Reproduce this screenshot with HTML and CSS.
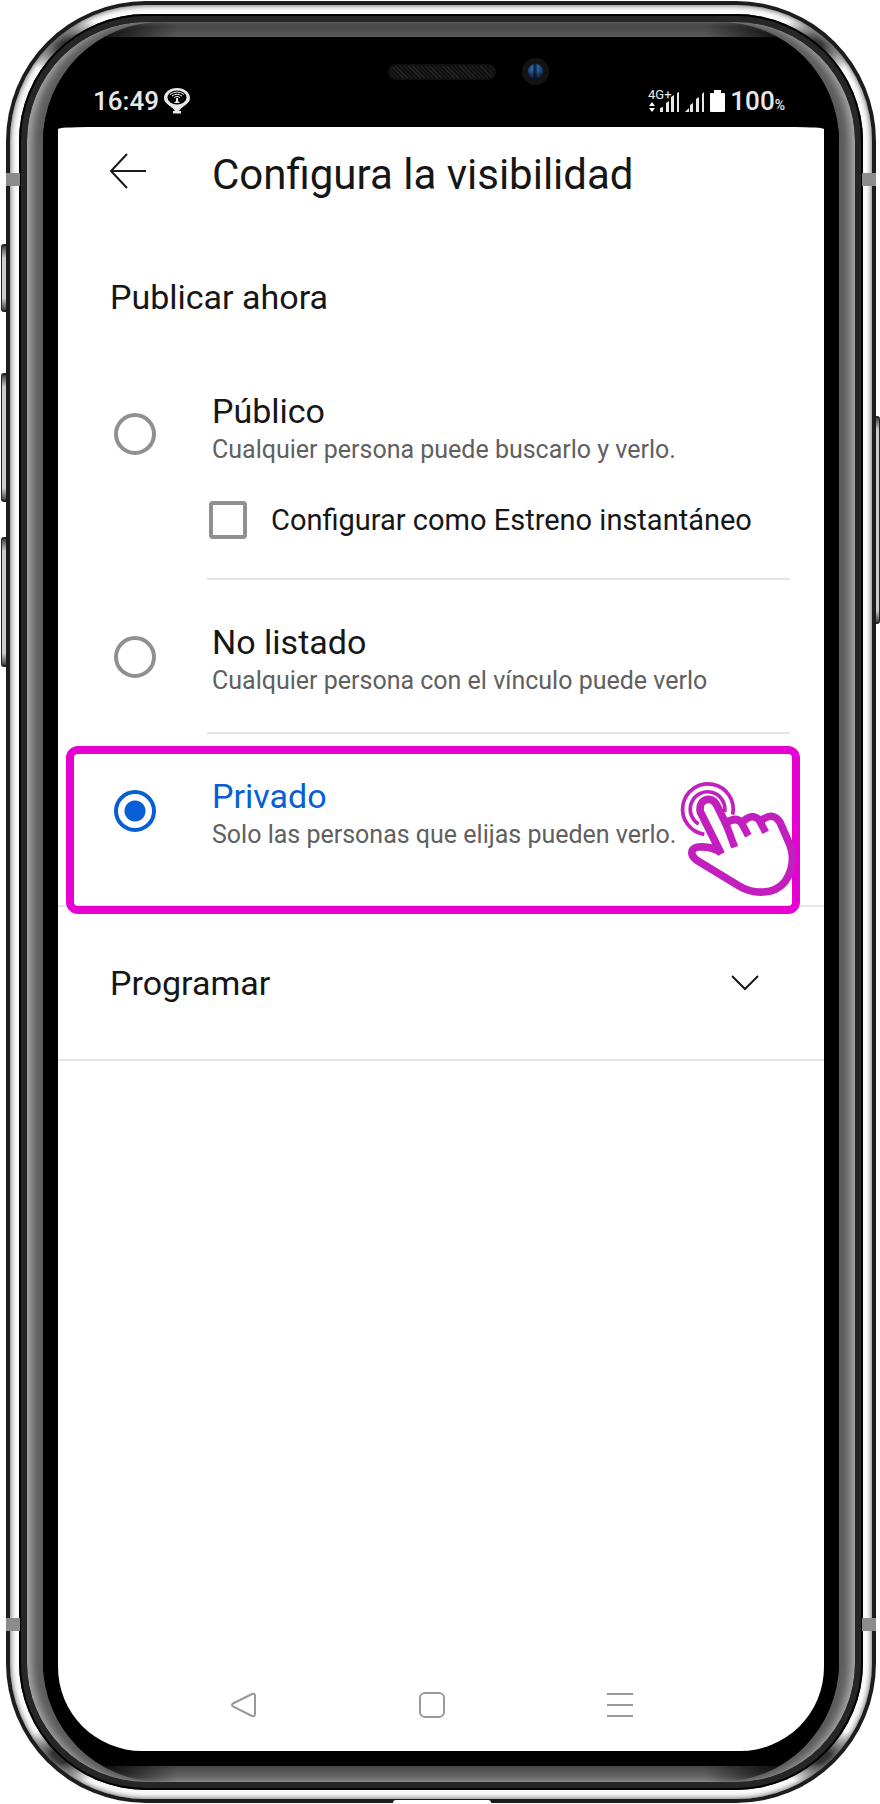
FILE: index.html
```html
<!DOCTYPE html>
<html lang="es">
<head>
<meta charset="utf-8">
<meta name="viewport" content="width=device-width, initial-scale=1">
<title>Configura la visibilidad</title>
<link rel="stylesheet" href="styles.css">
</head>
<body>
<div class="phone">
  <span class="key key-mute"></span>
  <span class="key key-up"></span>
  <span class="key key-down"></span>
  <span class="key key-power"></span>
  <div class="edge">
    <div class="steel">
      <div class="seal">
        <div class="bevel">
          <div class="glass">
            <div class="status">
              <span class="speaker"></span>
              <span class="camera"></span>
              <div class="status-group">
                <span class="clock">16:49</span>
                <svg class="pin" viewBox="0 0 26 26" aria-hidden="true">
                  <path d="M13 0C5.500 0 0 4.500 0 10c0 5 5 7 9 10.500L11 23H9v2.500h8V23h-2l2-2.500C21 17 26 15 26 10 26 4.500 20.500 0 13 0z" fill="#e8e8e8"/>
                  <ellipse cx="13" cy="9.500" rx="9.500" ry="7" fill="#000"/>
                  <path d="M6 6.500q7-5 14 0M8 8q5-3.500 10 0M10 9.500q3-2.500 6 0" fill="none" stroke="#e8e8e8" stroke-width="1"/>
                  <path d="M12 10h2v3l2 2h-6l2-2z" fill="#e8e8e8"/>
                </svg>
              </div>
              <div class="status-group">
                <svg class="network" viewBox="0 0 32 26" aria-hidden="true">
                  <text x="0" y="11" class="network-label">4G+</text>
                  <path d="M1 18l3-4 3 4zM1 20l3 4 3-4z" fill="#fff"/>
                  <path d="M12 24v-4l3-1v5zM18 24v-9l3-2v11zM23 24V9l3-2v17zM29 24V5l2-1v20z" fill="#e8e8e8"/>
                </svg>
                <svg class="bars" viewBox="0 0 20 26" aria-hidden="true">
                  <path d="M0 24l4-4v4zM5 24v-7l3-2v9zM11 24V11l3-2v15zM17 24V6l2-2v20z" fill="#e8e8e8"/>
                </svg>
                <svg class="battery" viewBox="0 0 15 26" aria-hidden="true">
                  <path d="M4 2h7v3h3q1 0 1 1v17q0 1-1 1H1q-1 0-1-1V6q0-1 1-1h3z" fill="#fff"/>
                </svg>
                <span class="clock">100<small>%</small></span>
              </div>
            </div>
            <main class="screen">
              <header class="header">
                <button class="back" type="button" aria-label="Atrás">
                  <svg viewBox="0 0 38 36" aria-hidden="true"><path d="M37 18H2M18 1L2 18l16 17"/></svg>
                </button>
                <h1>Configura la visibilidad</h1>
              </header>
              <form>
                <h2>Publicar ahora</h2>
                <div class="option option-extra">
                  <input type="radio" name="visibility" id="public">
                  <div class="option-body">
                    <label for="public"><strong>Público</strong><span>Cualquier persona puede buscarlo y verlo.</span></label>
                    <label class="check"><input type="checkbox">Configurar como Estreno instantáneo</label>
                  </div>
                </div>
                <div class="option">
                  <input type="radio" name="visibility" id="unlisted">
                  <div class="option-body">
                    <label for="unlisted"><strong>No listado</strong><span>Cualquier persona con el vínculo puede verlo</span></label>
                  </div>
                </div>
                <div class="option option-last">
                  <input type="radio" name="visibility" id="private" checked>
                  <div class="option-body">
                    <label for="private"><strong>Privado</strong><span>Solo las personas que elijas pueden verlo.</span></label>
                  </div>
                  <div class="highlight"></div>
                  <svg class="hand" viewBox="50 120 360 354" aria-hidden="true">
                    <g fill="none" stroke="#c31fbf">
                      <path d="M129 283A76 76 0 1 1 214 224" stroke-width="11"/>
                      <path d="M112 252A52 52 0 1 1 190 216" stroke-width="11"/>
                      <path d="M183 338L117 220C106 176 151 166 166 195L193 250Q224 228 241 249Q272 214 298 244Q334 212 356 247L381 304C400 345 399 384 371 425C338 464 278 465 232 437L110 363C84 346 86 325 112 321Q154 316 183 338z" fill="#fff" stroke="none"/>
                      <path d="M180 342L117 215C110 176 151 166 166 195L193 250Q224 228 241 249Q272 214 298 244Q334 212 356 247L381 304C400 345 399 384 371 425C338 464 278 465 232 437L110 363C84 346 86 325 112 321Q150 318 180 338" stroke-width="23"/>
                      <path d="M191 244L220 322M238 244L261 287M291 235L313 277" stroke-width="22"/>
                    </g>
                  </svg>
                </div>
                <button class="schedule" type="button">
                  <span>Programar</span>
                  <svg viewBox="0 0 28 16" aria-hidden="true"><path d="M1 1l13 13L27 1"/></svg>
                </button>
              </form>
              <nav class="nav">
                <button type="button" aria-label="Volver"><svg viewBox="0 0 26 26" aria-hidden="true"><path d="M2 11.500L21 2q3-1 3 2v18q0 3-3 2L2 14.500q-2-1.500 0-3z"/></svg></button>
                <button type="button" aria-label="Inicio"><svg viewBox="0 0 26 26" aria-hidden="true"><rect x="1" y="1" width="24" height="24" rx="5"/></svg></button>
                <button type="button" aria-label="Recientes"><svg viewBox="0 0 26 26" aria-hidden="true"><path d="M0 2h26M0 13h26M0 24h26"/></svg></button>
              </nav>
            </main>
          </div>
        </div>
      </div>
    </div>
    <span class="band band-tl"></span>
    <span class="band band-tr"></span>
    <span class="band band-bl"></span>
    <span class="band band-br"></span>
    <span class="port"></span>
  </div>
</div>
</body>
</html>
```
FILE: styles.css
```css
* { box-sizing: border-box; }

body {
  margin: 0;
  background: #fff;
  color: #161616;
  font-family: Roboto, "Noto Sans", sans-serif;
}

button {
  padding: 0;
  border: 0;
  background: none;
  color: inherit;
  font: inherit;
}

svg { display: block; }

/* Phone body: nested layers from the outer edge to the glass */
.phone {
  position: relative;
  display: flex;
  min-height: 100vh;
  padding: 1px 4px 1px 6px;
}

.edge, .steel, .seal, .bevel, .glass {
  display: flex;
  flex: 1;
  min-width: 0;
}

.edge {
  position: relative;
  padding: 4px;
  border-radius: 140px;
  background: #1c1e1d;
}

.steel {
  padding: 9px;
  border-radius: 136px;
  background:
    radial-gradient(ellipse 46px 30px at 60px 42px, #333 20%, transparent),
    radial-gradient(ellipse 46px 30px at calc(100% - 60px) 42px, #333 20%, transparent),
    radial-gradient(ellipse 46px 30px at 50px calc(100% - 42px), #333 20%, transparent),
    radial-gradient(ellipse 46px 30px at calc(100% - 50px) calc(100% - 42px), #333 20%, transparent),
    #fafafa;
  box-shadow: inset 0 0 5px 1px #777;
}

.seal {
  padding: 8px;
  border-radius: 127px;
  background: #262626;
  box-shadow: inset 0 0 0 2px #000;
}

/* Side highlights follow the curve; the top and bottom ones fade at the corners */
.bevel {
  padding: 15px 16px 16px;
  border-radius: 119px;
  background:
    linear-gradient(90deg, transparent 60px, #000 60px, transparent 150px, transparent calc(100% - 150px), #000 calc(100% - 60px), transparent calc(100% - 60px)) 0 0 / 100% 40px no-repeat,
    linear-gradient(90deg, transparent 60px, #000 60px, transparent 150px, transparent calc(100% - 150px), #000 calc(100% - 60px), transparent calc(100% - 60px)) 0 100% / 100% 40px no-repeat,
    linear-gradient(#3c3c3c, #5c5c5c) 0 0 / 100% 15px no-repeat,
    linear-gradient(#444, #777) 0 100% / 100% 16px no-repeat,
    #000;
  box-shadow:
    inset 9px 0 8px -4px #aaa,
    inset -9px 0 8px -4px #aaa,
    inset 16px 0 0 #5c5c5c,
    inset -16px 0 0 #5c5c5c;
}

.glass {
  flex-direction: column;
  padding: 0 15px 15px;
  border-radius: 104px;
  background: #000;
}

.key {
  position: absolute;
  left: 1px;
  width: 8px;
  border: solid #222;
  border-width: 2px 1px;
  border-radius: 3px 0 0 3px;
  background: linear-gradient(#444, #ccc 12px, #ccc calc(100% - 12px), #444);
}

.key-mute { top: 244px; height: 68px; }
.key-up { top: 373px; height: 129px; }
.key-down { top: 537px; height: 130px; }
.key-power {
  top: 416px;
  right: 0;
  left: auto;
  height: 208px;
  border-radius: 0 3px 3px 0;
}

.band {
  position: absolute;
  width: 14px;
  height: 13px;
  background: #8c8c8c;
}

.band-tl { top: 172px; left: 0; }
.band-tr { top: 172px; right: 0; }
.band-bl { bottom: 172px; left: 0; }
.band-br { bottom: 172px; right: 0; }

.port {
  position: absolute;
  bottom: 0;
  left: calc(50% - 48px);
  width: 98px;
  height: 3px;
  border-radius: 12px 12px 0 0;
  background: #fff;
}

/* Status bar */
.status {
  position: relative;
  display: flex;
  justify-content: space-between;
  align-items: flex-end;
  height: 90px;
  padding: 0 39px 10px 35px;
}

.status-group {
  display: flex;
  align-items: center;
  gap: 5px;
  color: #e8e8e8;
}

.clock {
  font-size: 26px;
  font-weight: 500;
  line-height: 32px;
}

.clock small {
  font-size: 14px;
  line-height: 14px;
}

.pin { width: 26px; height: 26px; }
.network { width: 32px; height: 26px; }
.network-label { fill: #e8e8e8; font-size: 13px; }
.bars { width: 20px; height: 26px; }
.battery { width: 15px; height: 26px; }

.speaker {
  position: absolute;
  top: 27px;
  left: calc(50% - 53px);
  width: 108px;
  height: 16px;
  border: 2px solid #111;
  border-radius: 8px;
  background: repeating-linear-gradient(45deg, #222 0 1px, #111 1px 3px);
}

.camera {
  position: absolute;
  top: 21px;
  left: calc(50% + 81px);
  width: 27px;
  height: 27px;
  border: 6px solid #131313;
  border-radius: 50%;
  background: linear-gradient(transparent 40%, #0a1528), linear-gradient(90deg, #1b4a86, #2a62a5 30%, #0a1528 45%, #28609f 65%, #163a68);
}

/* Screen */
.screen {
  display: flex;
  flex: 1;
  flex-direction: column;
  overflow: hidden;
  border-radius: 30px 30px 84px 84px / 2px 2px 84px 84px;
  background: #fff;
}

.header {
  display: flex;
  align-items: center;
  height: 96px;
  padding-left: 51px;
}

.back { margin-right: 65px; }

.back svg {
  width: 38px;
  height: 36px;
  margin-bottom: 8px;
}

.back path, .schedule path {
  fill: none;
  stroke: #1a1a1a;
  stroke-width: 2;
}

h1 {
  margin: 0;
  font-size: 42px;
  font-weight: 400;
  line-height: 50px;
}

h2 {
  margin: 0;
  padding-left: 52px;
  font-size: 34px;
  font-weight: 400;
  line-height: 148px;
}

.option {
  position: relative;
  display: flex;
  align-items: flex-start;
  padding: 42px 34px 0 56px;
}

.option-extra { padding-top: 20px; }

.option input {
  flex: none;
  margin: 0;
  appearance: none;
  border: 4px solid #909090;
}

.option input[type="radio"] {
  width: 42px;
  height: 42px;
  margin: 14px 51px 0 0;
  border-radius: 50%;
}

.option-extra input[type="radio"] { margin-top: 22px; }

.option input[type="radio"]:checked {
  border-color: #065fd4;
  background: radial-gradient(circle, #065fd4 10px, transparent 11px);
}

.option-body {
  flex: 1;
  padding-bottom: 32px;
  border-bottom: 2px solid #e5e5e5;
}

.option-extra .option-body { padding-bottom: 38px; }

.option-body label {
  display: block;
  padding-left: 5px;
}

.option strong {
  display: block;
  font-size: 34px;
  font-weight: 400;
  line-height: 40px;
}

.option span {
  display: block;
  color: #606060;
  font-size: 25px;
  line-height: 38px;
}

.option-body .check {
  display: flex;
  align-items: center;
  gap: 24px;
  margin-top: 31px;
  padding-left: 2px;
  font-size: 29px;
  line-height: 40px;
}

.check input {
  width: 38px;
  height: 38px;
  border-radius: 4px;
}

.option-last { border-bottom: 2px solid #e5e5e5; }

.option-last .option-body {
  padding-bottom: 51px;
  border: 0;
}

.option-last strong { color: #065fd4; }

.highlight {
  position: absolute;
  inset: 12px 24px -9px 8px;
  border: 8px solid #e600d2;
  border-radius: 12px;
  pointer-events: none;
}

.hand {
  position: absolute;
  top: 46px;
  right: 26px;
  width: 120px;
  height: 118px;
}

.schedule {
  display: flex;
  justify-content: space-between;
  align-items: center;
  width: 100%;
  padding: 0 65px 0 52px;
  border-bottom: 2px solid #e5e5e5;
  font-size: 34px;
  line-height: 152px;
}

.schedule svg {
  width: 28px;
  height: 16px;
}

.nav {
  display: flex;
  justify-content: center;
  gap: 162px;
  margin-top: auto;
  padding: 0 18px 33px 0;
}

.nav svg {
  width: 26px;
  height: 26px;
  fill: none;
  stroke: #999;
  stroke-width: 2;
}
```
